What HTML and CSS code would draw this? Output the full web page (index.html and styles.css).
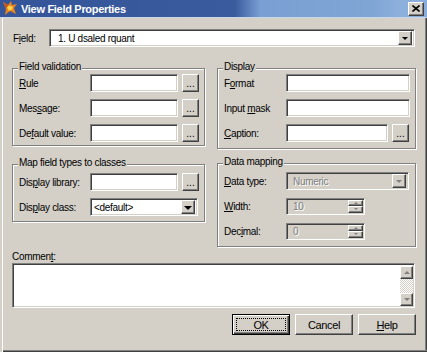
FILE: index.html
```html
<!DOCTYPE html>
<html>
<head>
<meta charset="utf-8">
<title>View Field Properties</title>
<link rel="stylesheet" href="styles.css">
</head>
<body>
<div class="window">
  <div class="titlebar">
    <svg class="app-icon" width="16" height="16" viewBox="0 0 16 16">
      <path d="M1 2 L6 5 L9 1 L10 5 L15 4 L12 8 L14 14 L8 11 L3 15 L4 9 Z" fill="#e8821e"/>
      <path d="M5 7 L8 5.5 L11 7 L10 10 L6.5 10.5 Z" fill="#ffd24a"/>
      <path d="M1 2 L6 5 L4 9 Z" fill="#c4561a"/>
    </svg>
    <span class="title">View Field Properties</span>
    <span class="close-btn raised">
      <svg width="8" height="7" viewBox="0 0 8 7"><path d="M0.5 0.5 L7.5 6.5 M7.5 0.5 L0.5 6.5" stroke="#000" stroke-width="1.6"/></svg>
    </span>
  </div>

  <div class="client">
    <div class="field-row">
      <span class="field-label">F<u>i</u>eld:</span>
      <div class="combo sunken combo-field">
        <span class="combo-text">1. U dsaled rquant</span>
        <span class="drop-btn raised"><i class="arrow"></i></span>
      </div>
    </div>

    <div class="columns">
      <div class="col">
        <div class="group">
          <div class="group-title">Field validation</div>
          <div class="rows">
            <div class="row"><span class="lbl lbl-left"><u>R</u>ule</span><span class="edit sunken edit-left"></span><span class="dots-btn raised">...</span></div>
            <div class="row"><span class="lbl lbl-left">Mes<u>s</u>age:</span><span class="edit sunken edit-left"></span><span class="dots-btn raised">...</span></div>
            <div class="row"><span class="lbl lbl-left">De<u>f</u>ault value:</span><span class="edit sunken edit-left"></span><span class="dots-btn raised">...</span></div>
          </div>
        </div>

        <div class="group group-map">
          <div class="group-title title-loose">Map field types to classes</div>
          <div class="rows">
            <div class="row"><span class="lbl lbl-left">Dis<u>p</u>lay library:</span><span class="edit sunken edit-left"></span><span class="dots-btn raised">...</span></div>
            <div class="row"><span class="lbl lbl-left">Dis<u>p</u>lay class:</span>
              <div class="combo sunken combo-class">
                <span class="combo-text">&lt;default&gt;</span>
                <span class="drop-btn raised"><i class="arrow arrow-big"></i></span>
              </div>
            </div>
          </div>
        </div>
      </div>

      <div class="col">
        <div class="group group-display">
          <div class="group-title">Display</div>
          <div class="rows">
            <div class="row"><span class="lbl lbl-right">F<u>o</u>rmat</span><span class="edit sunken edit-right"></span></div>
            <div class="row"><span class="lbl lbl-right">Input <u>m</u>ask</span><span class="edit sunken edit-right"></span></div>
            <div class="row"><span class="lbl lbl-right"><u>C</u>aption:</span><span class="edit sunken edit-caption"></span><span class="dots-btn raised">...</span></div>
          </div>
        </div>

        <div class="group group-data">
          <div class="group-title title-loose">Data mapping</div>
          <div class="rows">
            <div class="row"><span class="lbl lbl-right"><u>D</u>ata type:</span>
              <div class="combo sunken disabled combo-type">
                <span class="combo-text dim">Numeric</span>
                <span class="drop-btn raised"><i class="arrow arrow-dim"></i></span>
              </div>
            </div>
            <div class="row"><span class="lbl lbl-right"><u>W</u>idth:</span>
              <div class="spin sunken disabled">
                <span class="spin-text dim">10</span>
                <span class="spin-btns"><span class="spin-btn raised"><i class="tri-up"></i></span><span class="spin-btn raised"><i class="tri-down"></i></span></span>
              </div>
            </div>
            <div class="row"><span class="lbl lbl-right">Dec<u>i</u>mal:</span>
              <div class="spin sunken disabled">
                <span class="spin-text dim">0</span>
                <span class="spin-btns"><span class="spin-btn raised"><i class="tri-up"></i></span><span class="spin-btn raised"><i class="tri-down"></i></span></span>
              </div>
            </div>
          </div>
        </div>
      </div>
    </div>

    <div class="comment-label">Commen<u>t</u>:</div>
    <div class="comment-box sunken">
      <div class="comment-text"></div>
      <div class="vscroll">
        <span class="scroll-btn raised"><i class="tri-up tri-scroll"></i></span>
        <span class="scroll-track"></span>
        <span class="scroll-btn raised"><i class="tri-down tri-scroll"></i></span>
      </div>
    </div>

    <div class="buttons">
      <span class="push default"><span class="focus">OK</span></span>
      <span class="push raised">Cancel</span>
      <span class="push raised"><u>H</u>elp</span>
    </div>
  </div>
</div>
</body>
</html>
```

FILE: styles.css
```css
* { box-sizing: border-box; }
html, body { margin: 0; padding: 0; }
body {
  width: 427px;
  height: 352px;
  overflow: hidden;
  background: #d4d0c8;
  color: #000;
  font-family: "Liberation Sans", Arial, sans-serif;
  font-size: 10px;
  letter-spacing: -0.3px;
}
u { text-decoration: underline; text-underline-offset: 1px; }

.window {
  width: 427px;
  height: 352px;
  display: flex;
  flex-direction: column;
  background: #d4d0c8;
}

/* title bar */
.titlebar {
  flex: none;
  height: 18px;
  display: flex;
  align-items: center;
  padding: 0 3px 1px 2px;
  border-bottom: 1px solid #c8d6ea;
  background: linear-gradient(to right, #35559a 0%, #3a5b9d 55%, #7a9fd2 61%, #7fa5d5 87%, #8cafdc 93%, #8aaedb 100%);
}
.app-icon { flex: none; margin-right: 3px; }
.title {
  color: #fff;
  font-weight: bold;
  font-size: 11px;
  letter-spacing: -0.3px;
  margin-top: 2px;
}
.close-btn {
  margin-left: auto;
  width: 16px;
  height: 14px;
  display: flex;
  align-items: center;
  justify-content: center;
  margin-top: 1px;
}

/* bevels */
.raised {
  background: #d4d0c8;
  border: 1px solid;
  border-color: #fff #404040 #404040 #fff;
  box-shadow: inset -1px -1px #808080;
}
.sunken {
  background: #fff;
  border: 1px solid;
  border-color: #808080 #fff #fff #808080;
  box-shadow: inset 1px 1px #404040, inset -1px -1px #d4d0c8;
}
.sunken.disabled { background: #d4d0c8; }
.dim { color: #808080; text-shadow: 1px 1px #fff; }

/* client area */
.client {
  flex: 1;
  display: flex;
  flex-direction: column;
  padding: 11px 11px 0 12px;
  box-shadow: inset 2px 0 #d4d0c8, inset 3px 0 #fff, inset 0 -1px #404040, inset 0 -2px #808080, inset -1px 0 #404040, inset -2px 0 #808080;
}

.field-row {
  display: flex;
  align-items: center;
  height: 18px;
}
.field-label { width: 37px; padding-left: 1px; }

.combo {
  display: flex;
  align-items: center;
  height: 18px;
  padding: 1px;
}
.combo-text { flex: 1; padding-left: 2px; white-space: nowrap; overflow: hidden; }
.combo-field { width: 366px; }
.combo-field .combo-text { padding-left: 7px; }
.combo-class { width: 108px; }
.combo-type { width: 123px; }
.combo-type .combo-text { padding-left: 5px; }
.drop-btn {
  flex: none;
  width: 14px;
  height: 14px;
  margin-right: 1px;
  display: flex;
  align-items: center;
  justify-content: center;
}
.arrow {
  display: block;
  width: 0;
  height: 0;
  border-left: 3px solid transparent;
  border-right: 3px solid transparent;
  border-top: 3px solid #000;
  margin-top: 1px;
}
.arrow-big {
  border-left-width: 4px;
  border-right-width: 4px;
  border-top-width: 4px;
}
.arrow-dim { border-top-color: #808080; }

/* columns and groups */
.columns {
  display: grid;
  grid-template-columns: 193px 199px;
  column-gap: 12px;
  align-items: start;
  margin-top: 21px;
}
.col { display: flex; flex-direction: column; }

.group {
  border: 1px solid #808080;
  box-shadow: inset 1px 1px #fff, 1px 1px #fff;
  padding: 0 5px 3px 6px;
}
.group-display { padding-bottom: 6px; }
.group-map { margin-top: 18px; padding-bottom: 5px; }
.group-data { margin-top: 14px; padding-bottom: 6px; }

.group-title {
  width: fit-content;
  margin: -9px 0 1px -1px;
  padding: 0 1px;
  line-height: 13px;
  background: #d4d0c8;
  white-space: nowrap;
}
.group-title.title-loose { margin-bottom: 4px; }

.rows { display: flex; flex-direction: column; gap: 7px; }
.row { display: flex; align-items: center; height: 18px; }
.lbl { flex: none; white-space: nowrap; }
.lbl-left { width: 71px; }
.lbl-right { width: 62px; }

.edit { display: block; height: 18px; }
.edit-left { width: 88px; }
.edit-right { width: 124px; }
.edit-caption { width: 102px; }

.dots-btn {
  flex: none;
  width: 17px;
  height: 18px;
  margin-left: 4px;
  display: flex;
  align-items: flex-end;
  justify-content: center;
  padding-bottom: 3px;
  line-height: 8px;
  letter-spacing: 0;
  font-size: 10px;
}

/* spin boxes */
.spin {
  display: flex;
  width: 79px;
  height: 17px;
  padding: 1px;
}
.spin-text { flex: 1; padding-left: 5px; line-height: 13px; }
.spin-btns { flex: none; width: 15px; display: flex; flex-direction: column; }
.spin-btn {
  flex: 1;
  display: flex;
  align-items: center;
  justify-content: center;
}
.tri-up, .tri-down {
  display: block;
  width: 0;
  height: 0;
  border-left: 2px solid transparent;
  border-right: 2px solid transparent;
}
.tri-up { border-bottom: 2px solid #808080; }
.tri-down { border-top: 2px solid #808080; }

/* comment */
.comment-label {
  margin-top: 5px;
  line-height: 10px;
  height: 10px;
}
.comment-box {
  margin-top: 1px;
  width: 403px;
  height: 45px;
  display: flex;
  padding: 2px 1px 1px 2px;
}
.comment-text { flex: 1; }
.vscroll { flex: none; width: 13px; display: flex; flex-direction: column; }
.scroll-btn {
  flex: none;
  height: 13px;
  display: flex;
  align-items: center;
  justify-content: center;
}
.scroll-track {
  flex: 1;
  background-color: #fff;
  background-image: repeating-conic-gradient(#d4d0c8 0 25%, #fff 0 50%);
  background-size: 2px 2px;
}
.tri-scroll {
  border-left-width: 3px;
  border-right-width: 3px;
}
.tri-scroll.tri-up { border-bottom-width: 3px; }
.tri-scroll.tri-down { border-top-width: 3px; }

/* push buttons */
.buttons {
  display: flex;
  justify-content: flex-end;
  gap: 5px;
  margin-top: 6px;
}
.push {
  width: 58px;
  height: 21px;
  display: flex;
  align-items: center;
  justify-content: center;
  font-size: 11px;
  letter-spacing: -0.4px;
}
.push.default {
  background: #d4d0c8;
  border: 1px solid #000;
  box-shadow: inset 1px 1px #fff, inset -1px -1px #404040, inset -2px -2px #808080;
  padding: 3px;
}
.focus {
  width: 100%;
  height: 100%;
  display: flex;
  align-items: center;
  justify-content: center;
  border: 1px dotted #000;
}
```
